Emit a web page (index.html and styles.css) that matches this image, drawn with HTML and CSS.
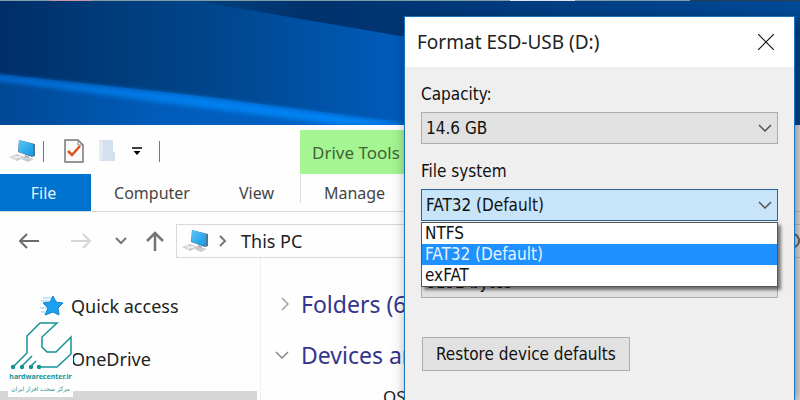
FILE: index.html
```html
<!DOCTYPE html>
<html lang="en">
<head>
  <meta charset="UTF-8">
  <meta name="viewport" content="width=device-width, initial-scale=1.0">
  <title>Format ESD-USB (D:)</title>
  <link rel="stylesheet" href="styles.css">
</head>
<body>
  <!-- shared icons -->
  <svg class="sprite" width="0" height="0" aria-hidden="true">
    <defs>
      <linearGradient id="screen" x1="0" y1="0" x2="1" y2="1">
        <stop offset="0" stop-color="#5cc4f6"/>
        <stop offset="1" stop-color="#129ae8"/>
      </linearGradient>
    </defs>
    <symbol id="pc" viewBox="0 0 28 24">
      <path d="M10 1 L26 5 L26 17 L23 18 L9 13 Z" fill="#52748c"/>
      <path d="M10 1 L24 5 L24 17 L9.500 13 Z" fill="url(#screen)"/>
      <path d="M16 16 L20 17 L20 20 L15 19 Z" fill="#a9b2b8"/>
      <path d="M12 20 L17 18 L25 20 L19 23 Z" fill="#c8cdd0"/>
      <path d="M0 18 L8 15 L16 18 L8 22 Z" fill="#c9cdd0"/>
      <path d="M3 18 L11 18 M5 17 L12 19 M5 20 L12 17" stroke="#f2f2f2" stroke-width="1"/>
    </symbol>
    <symbol id="down" viewBox="0 0 14 8">
      <path d="M1 1 L7 7 L13 1" fill="none" stroke="currentColor" stroke-width="1.500"/>
    </symbol>
  </svg>

  <div class="desktop">
    <svg class="wallpaper" viewBox="0 0 800 125" preserveAspectRatio="none" aria-hidden="true">
      <defs>
        <linearGradient id="sky" x1="0" x2="1">
          <stop offset="0" stop-color="#002e68"/>
          <stop offset=".12" stop-color="#003a78"/>
          <stop offset=".27" stop-color="#00468c"/>
          <stop offset=".5" stop-color="#005cbc"/>
          <stop offset="1" stop-color="#0050a8"/>
        </linearGradient>
        <linearGradient id="ground" x1="0" x2="1">
          <stop offset="0" stop-color="#004894"/>
          <stop offset=".4" stop-color="#005cba"/>
          <stop offset="1" stop-color="#0064c8"/>
        </linearGradient>
        <linearGradient id="dark" x1="0" x2="1">
          <stop offset="0" stop-color="#00407f"/>
          <stop offset=".2" stop-color="#00326c"/>
          <stop offset=".4" stop-color="#003878"/>
          <stop offset="1" stop-color="#004a98"/>
        </linearGradient>
        <linearGradient id="beam" x1="0" x2="1">
          <stop offset="0" stop-color="#0068cf"/>
          <stop offset=".5" stop-color="#007fee"/>
          <stop offset="1" stop-color="#0086f8"/>
        </linearGradient>
        <filter id="soft"><feGaussianBlur stdDeviation="2"/></filter>
      </defs>
      <rect width="800" height="125" fill="url(#sky)"/>
      <path d="M190 0 H800 V36 H400 Z" fill="url(#dark)"/>
      <path d="M0 74 L200 96 L400 122 V125 H0 Z" fill="url(#ground)"/>
      <path d="M-10 74 L200 97 L410 125 H340 L180 105 L-10 80 Z" fill="url(#beam)" filter="url(#soft)"/>
      <rect width="800" height="1" fill="#7f9da8"/>
      <rect x="50" width="42" height="1" fill="#c796a4"/>
      <rect x="510" width="65" height="1" fill="#dce6ee"/>
      <rect x="690" width="110" height="1" fill="#27404c"/>
    </svg>

    <main class="explorer">
      <header class="titlebar">
        <div class="quick">
          <svg class="pc" viewBox="0 0 28 24"><use href="#pc"/></svg>
          <span class="rule"></span>
          <svg class="doc" viewBox="0 0 20 24">
            <path d="M1 1 H14 L19 6 V23 H1 Z" fill="#fafafa" stroke="#777" stroke-width="1.500"/>
            <path d="M14 1 V6 H19" fill="none" stroke="#888"/>
            <path d="M4 12 L8 16 L16 7" fill="none" stroke="#e4501b" stroke-width="2.500"/>
          </svg>
          <svg class="folder" viewBox="0 0 16 22">
            <path d="M0 0 H14 V12 H16 V21 H0 Z" fill="#d3e1ef"/>
            <path d="M0 0 L4 2 V17 L2 21 H0 Z" fill="#e4edf6"/>
          </svg>
          <svg class="more" viewBox="0 0 10 8">
            <path d="M0 1 H10" stroke="#000" stroke-width="1.500"/>
            <path d="M1.500 4 H8.500 L5 8 Z"/>
          </svg>
          <span class="rule"></span>
        </div>
        <div class="context">Drive Tools</div>
      </header>

      <nav class="tabs">
        <a class="tab tab-file" href="#">File</a>
        <a class="tab tab-computer" href="#">Computer</a>
        <a class="tab tab-view" href="#">View</a>
        <a class="tab tab-manage" href="#">Manage</a>
      </nav>

      <div class="navbar">
        <div class="arrows">
          <svg class="arrow" viewBox="0 0 20 16"><path d="M20 8 H1 M8 1 L1 8 L8 15" fill="none" stroke="#6c6c6c" stroke-width="2"/></svg>
          <svg class="arrow" viewBox="0 0 20 16"><path d="M0 8 H19 M12 1 L19 8 L12 15" fill="none" stroke="#d6d6d6" stroke-width="2"/></svg>
          <svg class="recent" viewBox="0 0 12 8"><path d="M1 1 L6 6 L11 1" fill="none" stroke="#777" stroke-width="2"/></svg>
          <svg class="up" viewBox="0 0 18 20"><path d="M9 20 V2 M1 10 L9 2 L17 10" fill="none" stroke="#757575" stroke-width="2.500"/></svg>
        </div>
        <div class="address">
          <svg class="pc" viewBox="0 0 28 24"><use href="#pc"/></svg>
          <svg class="crumb" viewBox="0 0 8 12"><path d="M1 1 L6 6 L1 11" fill="none" stroke="#777" stroke-width="2"/></svg>
          <span>This PC</span>
          <svg class="refresh" viewBox="0 0 16 16"><path d="M10 1 A7 7 0 1 1 4 2" fill="none" stroke="#777" stroke-width="2"/></svg>
        </div>
      </div>

      <div class="content">
        <aside class="sidebar">
          <a class="place" href="#">
            <svg class="star" viewBox="0 0 24 20">
              <path d="M13 0 L16 6 L23 7 L18 12 L19 19 L13 16 L5 19 L8 12 L3 7 L10 6 Z" fill="#1ba1ef" stroke="#137fc9"/>
              <path d="M3 2 H11 M1 5 H9 M0 12 H7 M1 16 H5" stroke="#8dcbf0" stroke-width="1"/>
            </svg>
            Quick access
          </a>
          <a class="place" href="#"><span class="star"></span>OneDrive</a>
          <div class="selected"></div>
        </aside>
        <section class="files">
          <h2 class="group"><svg class="closed" viewBox="0 0 8 14"><path d="M1 1 L7 7 L1 13" fill="none" stroke="#a0a0a0" stroke-width="1.500"/></svg>Folders (6)</h2>
          <h2 class="group"><svg class="open" viewBox="0 0 14 8"><use href="#down"/></svg>Devices and drives</h2>
          <p class="drive">OS (C:)</p>
        </section>
      </div>
    </main>

    <div class="brand">
      <svg viewBox="0 0 62 48" fill="none" stroke="#159395" stroke-width="1.500" aria-hidden="true">
        <path d="M3 45 L17 31 V14 L30 1 H47 L32 15 V25 L37 30 H46 L61 15 V32 L47 45 H29"/>
        <path d="M11 45 L22 34 M20 45 L26 39"/>
        <g fill="#159395" stroke="none"><circle cx="3" cy="45" r="2.200"/><circle cx="12" cy="45" r="2.200"/><circle cx="21" cy="45" r="2.200"/><circle cx="29" cy="45" r="2.200"/></g>
      </svg>
      <span class="site">hardwarecenter.ir</span>
      <span class="motto" lang="fa" dir="rtl">مرکز سخت افزار ایران</span>
    </div>

    <form class="dialog">
      <header class="caption">
        <h1>Format ESD-USB (D:)</h1>
        <button class="close" type="button" aria-label="Close">
          <svg viewBox="0 0 16 16"><path d="M0 0 L16 16 M16 0 L0 16" stroke="#111" stroke-width="1.200"/></svg>
        </button>
      </header>
      <div class="fields">
        <div class="field">
          <label for="capacity">Capacity:</label>
          <div class="combo">
            <select id="capacity"><option>14.6 GB</option></select>
            <svg viewBox="0 0 14 8"><use href="#down"/></svg>
          </div>
        </div>
        <div class="field">
          <label for="filesystem">File system</label>
          <div class="combo combo-open">
            <select id="filesystem">
              <option>NTFS</option>
              <option selected>FAT32 (Default)</option>
              <option>exFAT</option>
            </select>
            <svg viewBox="0 0 14 8"><use href="#down"/></svg>
            <ul class="list" role="listbox" aria-label="File system">
              <li role="option">NTFS</li>
              <li role="option" class="active" aria-selected="true">FAT32 (Default)</li>
              <li role="option">exFAT</li>
            </ul>
          </div>
        </div>
        <div class="field">
          <label for="unit">Allocation unit size</label>
          <div class="combo">
            <select id="unit"><option>8192 bytes</option></select>
            <svg viewBox="0 0 14 8"><use href="#down"/></svg>
          </div>
        </div>
        <button class="restore" type="button">Restore device defaults</button>
      </div>
    </form>
  </div>
</body>
</html>
```
FILE: styles.css
```css
* {
  box-sizing: border-box;
}

body {
  margin: 0;
  font-family: "Noto Sans", "Open Sans", sans-serif;
  font-size: 17px;
  color: #222;
}

h1, h2, p, ul {
  margin: 0;
  padding: 0;
  font-weight: normal;
}

a {
  color: inherit;
  text-decoration: none;
}

svg {
  display: block;
  flex: none;
}

.sprite {
  position: absolute;
}

.desktop {
  position: relative;
  display: flex;
  flex-direction: column;
  height: 100vh;
  overflow: hidden;
}

.wallpaper {
  width: 100%;
  height: 125px;
}

/* explorer window */
.explorer {
  flex: 1;
  display: flex;
  flex-direction: column;
  min-height: 0;
  background: #fefefe;
}

.titlebar {
  display: flex;
  height: 49px;
  padding-top: 5px;
}

.quick {
  display: flex;
  align-items: center;
  width: 300px;
  height: 42px;
  padding-left: 9px;
}

.pc {
  width: 28px;
  height: 24px;
}

.rule {
  width: 1px;
  height: 21px;
  margin-left: 6px;
  background: #777;
}

.doc {
  width: 20px;
  height: 24px;
  margin-left: 20px;
}

.folder {
  width: 16px;
  height: 22px;
  margin-left: 15px;
}

.more {
  width: 10px;
  height: 8px;
  margin: 0 11px 0 17px;
}

.context {
  width: 108px;
  padding-left: 12px;
  line-height: 46px;
  color: #3f6336;
  background: #a5f593;
}

.tabs {
  display: flex;
  height: 38px;
  line-height: 38px;
  border-bottom: 1px solid #d8d8d8;
  font-size: 16px;
  color: #444;
}

.tab {
  text-align: center;
}

.tab-file {
  width: 91px;
  padding-right: 4px;
  color: #e4f1fc;
  background: #0072cf;
}

.tab-computer {
  width: 122px;
}

.tab-view {
  width: 87px;
}

.tab-manage {
  width: 108px;
  height: 29px;
  border-left: 1px solid #ddd;
}

.navbar {
  display: flex;
  padding-top: 12px;
}

.arrows {
  display: flex;
  align-items: center;
  width: 176px;
  padding-left: 19px;
}

.arrow {
  width: 20px;
  height: 16px;
  margin-right: 32px;
}

.arrow + .arrow {
  margin-right: 24px;
}

.recent {
  width: 12px;
  height: 8px;
  margin-right: 19px;
}

.up {
  width: 18px;
  height: 20px;
}

.address {
  flex: 1;
  display: flex;
  align-items: center;
  height: 34px;
  padding-left: 5px;
  border: 1px solid #d9d9d9;
  border-right: 0;
  font-size: 18px;
}

.crumb {
  width: 8px;
  height: 12px;
  margin: 0 14px 0 9px;
}

.refresh {
  width: 16px;
  height: 16px;
  margin-left: auto;
}

.content {
  flex: 1;
  display: flex;
  min-height: 0;
}

.sidebar {
  display: flex;
  flex-direction: column;
  width: 261px;
  padding: 21px 3px 0 0;
  border-right: 1px solid #f0f0f0;
}

.place {
  display: flex;
  align-items: center;
  height: 53px;
  padding-left: 40px;
  font-size: 18px;
}

.star {
  width: 24px;
  height: 20px;
  margin-right: 7px;
}

.selected {
  flex: 1;
  margin-top: 6px;
  background: #d6d6d6;
}

.files {
  padding: 20px 0 0 14px;
}

.group {
  display: flex;
  align-items: center;
  height: 51px;
  font-size: 23px;
  color: #35358c;
  white-space: nowrap;
}

.closed {
  width: 8px;
  height: 14px;
  margin: 0 12px 0 6px;
}

.open {
  width: 14px;
  height: 8px;
  margin-right: 12px;
  color: #888;
}

.drive {
  padding-left: 108px;
  line-height: 34px;
}

/* logo over the sidebar */
.brand {
  position: absolute;
  left: 8px;
  bottom: 3px;
  display: flex;
  flex-direction: column;
  align-items: center;
  width: 65px;
  height: 75px;
  background: #fefefe;
  color: #159395;
  white-space: nowrap;
}

.brand svg {
  width: 62px;
  height: 48px;
}

.site {
  font-size: 7px;
  font-weight: bold;
  line-height: 14px;
}

.motto {
  font-family: "DejaVu Sans", sans-serif;
  font-size: 6px;
  line-height: 10px;
}

/* format dialog */
.dialog {
  position: absolute;
  top: 16px;
  right: 5px;
  bottom: 0;
  width: 391px;
  border: 1px solid #1874bd;
  border-bottom: 0;
  background: #efefef;
  box-shadow: 4px 6px 14px rgba(0, 0, 0, 0.5);
}

.caption {
  display: flex;
  align-items: center;
  justify-content: space-between;
  height: 50px;
  padding: 0 20px 0 12px;
  background: #fff;
}

.caption h1 {
  font-size: 19px;
}

.close {
  padding: 0;
  border: 0;
  background: none;
}

.close svg {
  width: 16px;
  height: 16px;
}

.fields {
  padding: 15px 16px 0;
  font-family: "DejaVu Sans Condensed", "DejaVu Sans", sans-serif;
  font-size: 17px;
  color: #111;
}

.field {
  margin-bottom: 15px;
}

.field label {
  display: block;
  height: 30px;
  line-height: 24px;
}

.combo {
  position: relative;
  display: grid;
  align-items: center;
}

.combo select,
.combo > svg {
  grid-area: 1 / 1;
}

.combo select {
  width: 100%;
  height: 32px;
  padding: 0 4px;
  appearance: none;
  border: 1px solid #adadad;
  border-radius: 0;
  background: #e1e1e1;
  font: inherit;
  color: inherit;
}

.combo > svg {
  justify-self: end;
  width: 14px;
  height: 8px;
  margin-right: 6px;
  color: #555;
  pointer-events: none;
}

.combo-open select {
  border-color: #2a6595;
  background: #c8e4f8;
}

.list {
  position: absolute;
  z-index: 1;
  top: 33px;
  left: 0;
  right: 0;
  border: 1px solid #555;
  background: #fff;
  box-shadow: 3px 3px 3px rgba(0, 0, 0, 0.5);
  list-style: none;
}

.list li {
  padding-left: 3px;
  line-height: 21px;
}

.list .active {
  color: #e6f3ff;
  background: #1e90ff;
}

.restore {
  height: 34px;
  margin: 24px 0 0 1px;
  padding: 0 13px;
  border: 1px solid #adadad;
  background: #e1e1e1;
  font: inherit;
  color: inherit;
}
```
